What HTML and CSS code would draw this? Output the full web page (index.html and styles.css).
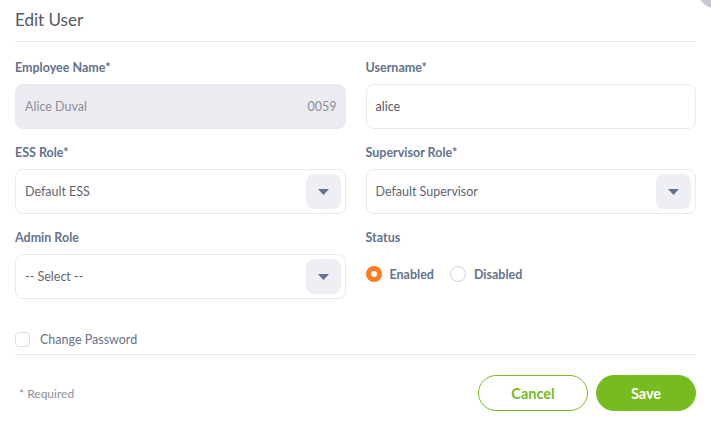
FILE: index.html
```html
<!DOCTYPE html>
<html>
<head>
<meta charset="utf-8">
<link rel="stylesheet" href="styles.css">
</head>
<body>
<div class="modal">
  <span class="close-btn"></span>
  <h6 class="title">Edit User</h6>
  <hr class="divider">
  <form class="form">
    <div class="grid">
      <div class="field">
        <label class="label">Employee Name*</label>
        <div class="input disabled"><span>Alice Duval</span><span>0059</span></div>
      </div>
      <div class="field">
        <label class="label">Username*</label>
        <div class="input"><span class="value">alice</span></div>
      </div>
      <div class="field">
        <label class="label">ESS Role*</label>
        <div class="input select"><span class="value">Default ESS</span><span class="arrow"><svg width="11" height="6" viewBox="0 0 11 6"><path d="M0 0h11L5.5 6z" fill="#64728c"/></svg></span></div>
      </div>
      <div class="field">
        <label class="label">Supervisor Role*</label>
        <div class="input select"><span class="value">Default Supervisor</span><span class="arrow"><svg width="11" height="6" viewBox="0 0 11 6"><path d="M0 0h11L5.5 6z" fill="#64728c"/></svg></span></div>
      </div>
      <div class="field">
        <label class="label">Admin Role</label>
        <div class="input select"><span class="value">-- Select --</span><span class="arrow"><svg width="11" height="6" viewBox="0 0 11 6"><path d="M0 0h11L5.5 6z" fill="#64728c"/></svg></span></div>
      </div>
      <div class="field">
        <label class="label">Status</label>
        <div class="radios">
          <span class="radio"><span class="dot on"></span>Enabled</span>
          <span class="radio"><span class="dot"></span>Disabled</span>
        </div>
      </div>
    </div>
    <div class="check-row"><span class="checkbox"></span>Change Password</div>
    <hr class="divider">
    <div class="actions">
      <span class="required">* Required</span>
      <div class="buttons">
        <button type="button" class="btn ghost">Cancel</button>
        <button type="button" class="btn primary">Save</button>
      </div>
    </div>
  </form>
</div>
</body>
</html>
```

FILE: styles.css
```css
* { box-sizing: border-box; }
html, body { margin: 0; padding: 0; background: #fff; }
body {
  font-family: "Lato", "Open Sans", sans-serif;
  width: 711px;
  height: 426px;
  overflow: hidden;
}
.modal {
  position: relative;
  padding: 0 15px;
}
.close-btn {
  position: absolute;
  right: -18px;
  top: -22px;
  width: 30px;
  height: 30px;
  border-radius: 50%;
  background: #c4c6d2;
}
.title {
  margin: 0;
  padding-top: 10px;
  height: 41px;
  font-size: 17px;
  line-height: 20px;
  font-weight: 400;
  color: #55585e;
}
.divider {
  margin: 0;
  border: 0;
  border-top: 1px solid #e6e7ec;
}
.form { margin: 0; padding-top: 18px; }
.grid {
  display: grid;
  grid-template-columns: 1fr 1fr;
  column-gap: 20px;
  row-gap: 16px;
}
.field { display: flex; flex-direction: column; }
.label {
  font-size: 12.5px;
  line-height: 16px;
  font-weight: 700;
  color: #64728c;
  margin-bottom: 8px;
}
.input {
  height: 45px;
  border: 1px solid #e8eaef;
  border-radius: 8px;
  display: flex;
  align-items: center;
  justify-content: space-between;
  padding: 0 8px 0 9px;
  font-size: 12.5px;
  color: #55585f;
}
.input.disabled {
  background: #ebebf1;
  color: #8d8f99;
  padding-right: 8px;
}
.select { padding-right: 4px; }
.select .value { color: #64646e; }
.arrow {
  width: 35px;
  height: 35px;
  border-radius: 8px;
  background: #eeeff4;
  display: flex;
  align-items: center;
  justify-content: center;
}
.arrow svg { display: block; }
.radios {
  height: 40px;
  display: flex;
  align-items: center;
  gap: 16px;
}
.radio {
  display: flex;
  align-items: center;
  gap: 8px;
  font-size: 12.5px;
  font-weight: 700;
  color: #64728c;
}
.dot {
  width: 16px;
  height: 16px;
  border-radius: 50%;
  border: 1px solid #d0d2dc;
  background: #fff;
}
.dot.on {
  border: 5px solid #ff7b1d;
  background: #fff;
}
.check-row {
  display: flex;
  align-items: center;
  gap: 10px;
  margin-top: 32px;
  height: 16px;
  margin-bottom: 7px;
  font-size: 12.5px;
  color: #64728c;
}
.checkbox {
  width: 15px;
  height: 15px;
  border: 1px solid #dcdee6;
  border-radius: 4px;
}
.actions {
  display: flex;
  justify-content: space-between;
  align-items: center;
  padding-top: 20px;
}
.required {
  font-size: 12px;
  color: #8d8f99;
  padding-left: 4px;
}
.buttons { display: flex; gap: 8px; }
.btn {
  height: 36px;
  border-radius: 18px;
  font-family: inherit;
  font-size: 14.5px;
  font-weight: 700;
  cursor: pointer;
}
.ghost {
  width: 110px;
  background: #fff;
  border: 1px solid #76bc21;
  color: #76bc21;
}
.primary {
  width: 100px;
  background: #76bc21;
  border: 1px solid #76bc21;
  color: #fff;
}
```
